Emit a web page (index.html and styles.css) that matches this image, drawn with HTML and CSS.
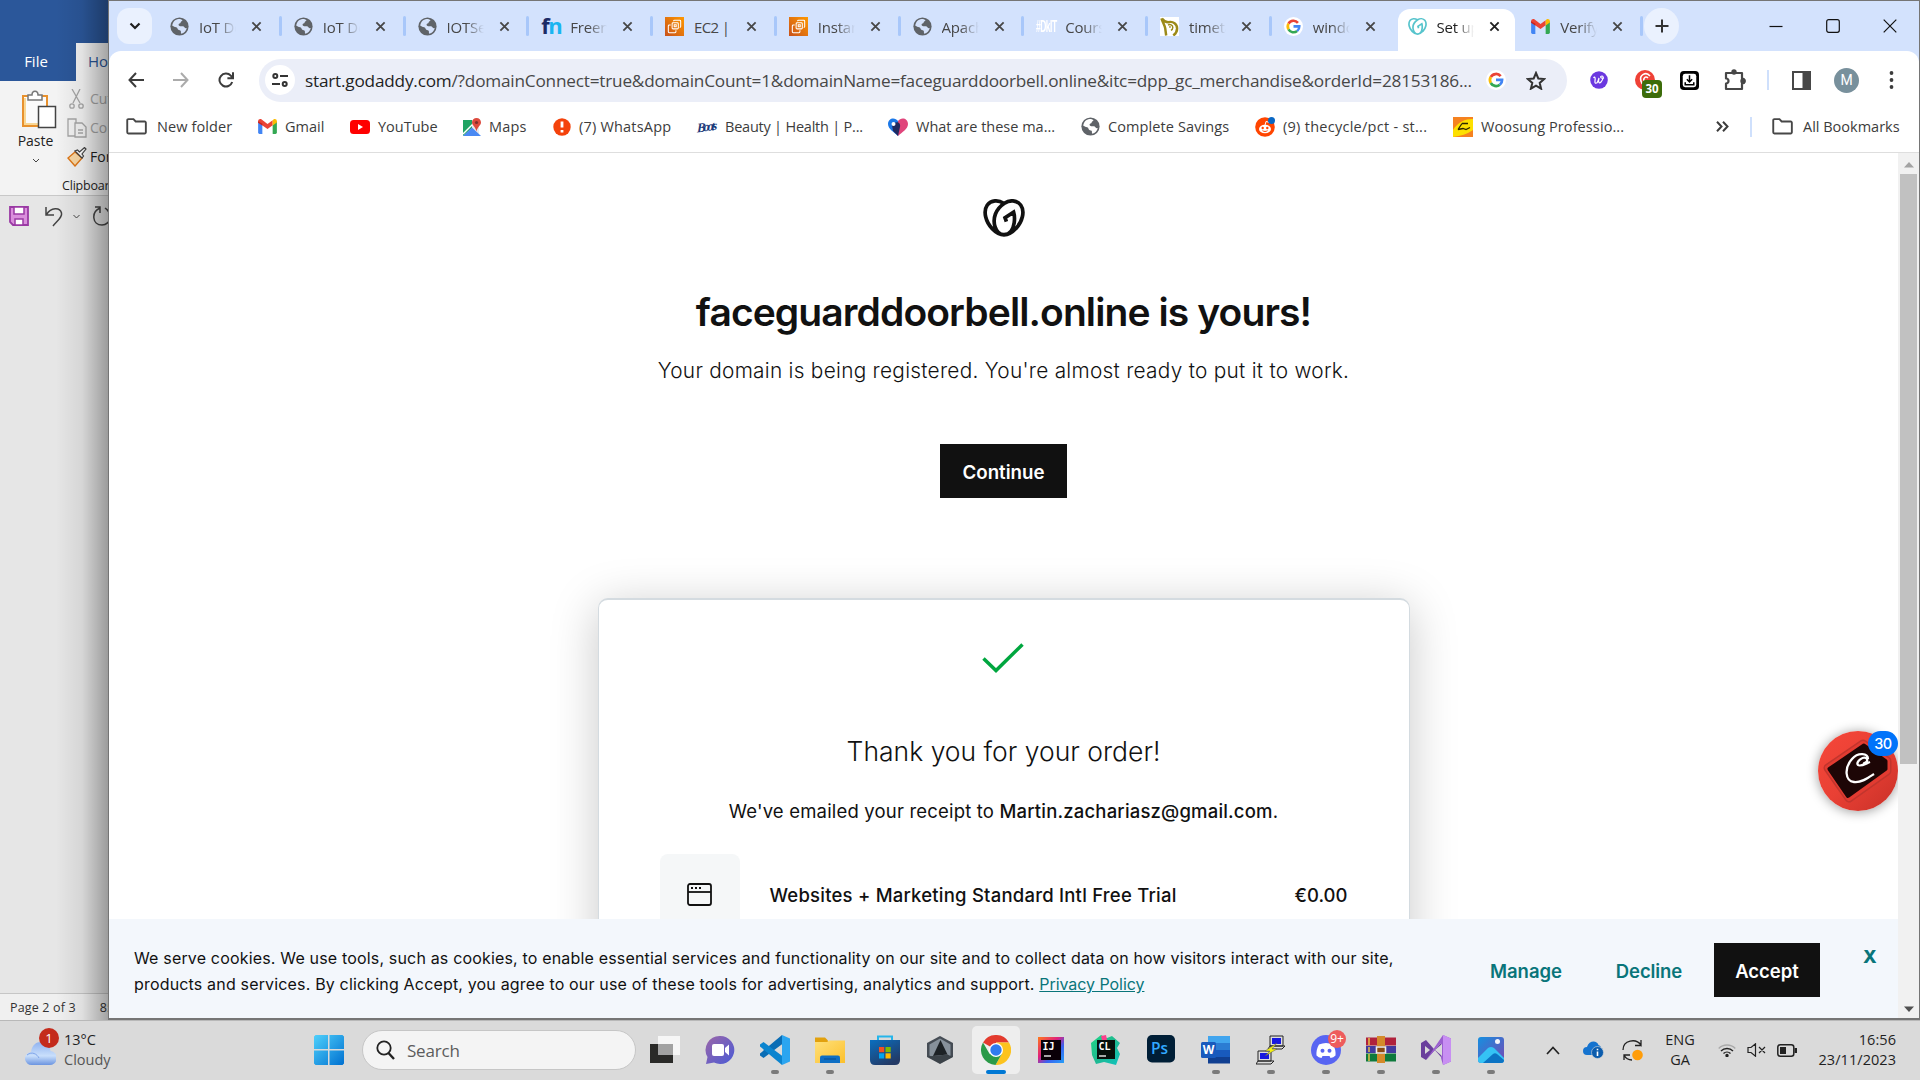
FILE: index.html
```html
<!DOCTYPE html>
<html lang="en">
<head>
<meta charset="utf-8">
<title>Set up your domain</title>
<link rel="stylesheet" href="styles.css">
</head>
<body>
<svg class="defs" width="0" height="0" aria-hidden="true">
  <defs>
    <linearGradient id="gWin" x1="0" y1="0" x2="1" y2="1"><stop offset="0" stop-color="#4fd0fb"/><stop offset="1" stop-color="#0070d0"/></linearGradient>
    <linearGradient id="gAws" x1="0" y1="1" x2="1" y2="0"><stop offset="0" stop-color="#c8511b"/><stop offset="1" stop-color="#f90"/></linearGradient>
    <linearGradient id="gFolder" x1="0" y1="0" x2="1" y2="1"><stop offset="0" stop-color="#ffe07a"/><stop offset="1" stop-color="#fcc02c"/></linearGradient>
    <linearGradient id="gStore" x1="0" y1="0" x2="0.6" y2="1"><stop offset="0" stop-color="#0a6fc0"/><stop offset="1" stop-color="#233a66"/></linearGradient>
    <linearGradient id="gTeams" x1="0" y1="0" x2="1" y2="1"><stop offset="0" stop-color="#9c66a8"/><stop offset="1" stop-color="#4a5bd6"/></linearGradient>
    <linearGradient id="gPhoto" x1="0" y1="0" x2="1" y2="1"><stop offset="0" stop-color="#1590e0"/><stop offset="1" stop-color="#7848b4"/></linearGradient>
    <linearGradient id="gIj" x1="0" y1="0" x2="1" y2="1"><stop offset="0" stop-color="#ff7a1a"/><stop offset=".4" stop-color="#e0207c"/><stop offset=".65" stop-color="#3a62f0"/><stop offset="1" stop-color="#25a0f8"/></linearGradient>
    <linearGradient id="gCloud" x1="0" y1="0" x2="0" y2="1"><stop offset="0" stop-color="#8fb2f0"/><stop offset=".6" stop-color="#c9dffb"/><stop offset="1" stop-color="#6b94e0"/></linearGradient>
    <linearGradient id="gCl" x1="0" y1="0" x2="1" y2="1"><stop offset="0" stop-color="#21d789"/><stop offset=".5" stop-color="#1fb98f"/><stop offset="1" stop-color="#0fc3c0"/></linearGradient>
    <symbol id="globe" viewBox="0 0 20 20"><circle cx="10" cy="10" r="9.600" fill="#5f6368"/><path class="land" d="M9 2.200c2 0 3 .5 4.200 1.300-.4 1-1.700 1-2 2.200-.2 1.200-2.400 1-2.200 2.600.2 1.400 3 1.300 4.600 1.500 1.600.2 1.800 2.600 4 1.900-.6 3-2.700 5.200-5.600 6-1-.7-.1-2.300-.8-3.100-.9-.9-3-.5-3.200-2.100-.3-1.900-2.600-1.600-3.600-2.200C3.500 9.800 2.900 9.400 2.400 9.300 2.800 5.300 5.400 2.500 9 2.200z"/></symbol>
    <symbol id="google" viewBox="0 0 24 24"><circle cx="12" cy="12" r="12" fill="#fff"/><g fill="none" stroke-width="3.300"><path d="M17.600 7.400A7.300 7.300 0 0 0 5.700 8.400" stroke="#ea4335"/><path d="M5.700 8.400a7.300 7.300 0 0 0 0 7.200" stroke="#fbbc05"/><path d="M5.700 15.600a7.300 7.300 0 0 0 10.900 2.100" stroke="#34a853"/><path d="M16.600 17.700a7.300 7.300 0 0 0 2.700-5.900H12" stroke="#4285f4"/></g></symbol>
    <symbol id="gmail" viewBox="0 0 20 16"><path d="M0 2.500V14.500A1.500 1.500 0 0 0 1.500 16H4.500V6z" fill="#4285f4"/><path d="M20 2.500V14.500A1.500 1.500 0 0 1 18.500 16H15.500V6z" fill="#34a853"/><path d="M0 2.300C0 .2 2.300-.6 3.800.5L10 5.200 15.500 1.200V6.600L10 10.700 0 3.800z" fill="#ea4335"/><path d="M15.500 1.200 16.400.5C18 -.6 20 .3 20 2.300V3.800L15.500 7z" fill="#fbbc04"/><path d="M0 2.500 4.500 5v2L0 4z" fill="#c5221f"/></symbol>
    <symbol id="folder" viewBox="0 0 22 18"><path d="M1.200 2.500a1.200 1.200 0 0 1 1.200-1.300h5.400l2.300 2.500h9.600a1.200 1.200 0 0 1 1.200 1.200v10.300a1.200 1.200 0 0 1-1.200 1.200H2.400a1.200 1.200 0 0 1-1.200-1.200z" fill="none" stroke="#474747" stroke-width="2"/></symbol>
    <symbol id="ec2" viewBox="0 0 20 20"><path d="M0 0h20v20H0z" fill="url(#gAws)"/><g fill="none" stroke="#fff" stroke-width="1.100"><rect x="7.500" y="6" width="6.500" height="6.500" rx="1"/><path d="M9.700 8.200h2.100v2.100H9.700z"/><path d="M6 8.500H4.500q-1 0-1 1v6q0 1 1 1h6q1 0 1-1V14M9 4.500q0-1 1-1h5.500q1 0 1 1V10q0 1-1 1"/></g></symbol>
    <symbol id="x" viewBox="0 0 12 12"><path d="M1.500 1.500l9 9M10.500 1.500l-9 9" stroke="currentColor" stroke-width="2" fill="none"/></symbol>
    <symbol id="gd" viewBox="0 0 42 38"><g fill="none" stroke="currentColor" stroke-width="3.700"><path d="M20.500 4.200C15.500.8 8 1 4.300 6 -.2 12.500 2.800 23 9.200 29.600c3 3.100 7.300 6.200 11.800 6.200s9-3.100 11.800-6.200C39.200 23 42.300 12.500 37.700 6 33.800.8 26.500.8 21.500 4.200 12.500 10 9.500 19.500 12 27.500c1.500 4.800 5 8.200 9 8.200 6 0 9.300-6 10.200-12 .6-4.300.3-7.700-.6-10.600l-8.600 5.600 1.400 4"/></g></symbol>
  </defs>
</svg>

<main class="desktop">
  <aside class="word">
    <div class="word-title"></div>
    <div class="word-tabs"><span class="word-file">File</span><span class="word-home">Home</span></div>
    <div class="ribbon">
      <div class="ribbon-body">
        <div class="paste">
          <svg width="36" height="40" viewBox="0 0 36 40"><path d="M2 6h24v30H2z" fill="#fbfbfb" stroke="#e8912d" stroke-width="2"/><path d="M4 8v26h14" fill="none" stroke="#f8d795" stroke-width="2"/><path d="M7 5h4c0-5 6-5 6 0h4v5H7z" fill="#fff" stroke="#777" stroke-width="1.500"/><path d="M17.500 16.500h17v21h-17z" fill="#fff" stroke="#444" stroke-width="1.500"/></svg>
          <span>Paste</span>
          <svg width="8" height="5" viewBox="0 0 8 5"><path d="M1 1l3 3 3-3" fill="none" stroke="#444"/></svg>
        </div>
        <div class="clip">
          <span class="off"><svg width="20" height="20" viewBox="0 0 20 20" fill="none" stroke="#a6a6a6" stroke-width="1.300"><path d="M5 0l8 14M13 0L6 14"/><circle cx="5" cy="17" r="2.200"/><circle cx="14" cy="17" r="2.200"/></svg>Cut</span>
          <span class="off"><svg width="20" height="20" viewBox="0 0 20 20" fill="#f3f3f3" stroke="#a6a6a6" stroke-width="1.300"><path d="M1 1h8v17H1z"/><path d="M8 5h7l4 4v10H8zM11 12h5M11 15h5"/></svg>Copy</span>
          <span><svg width="20" height="20" viewBox="0 0 20 20"><path d="M8 5L1 11l7 8 7-8z" fill="#fbd9a5" stroke="#e07818" stroke-width="1.400"/><path d="M8 4l7 7 1.500-2L15 7l4-5-1.500-1.500L12.500 5 10.500 3z" fill="#fff" stroke="#444" stroke-width="1.200"/></svg>Format</span>
        </div>
      </div>
      <span class="ribbon-label">Clipboard</span>
    </div>
    <div class="quick">
      <svg width="20" height="20" viewBox="0 0 20 20"><path d="M1 1h18v18H4l-3-3z" fill="#da8fdc" stroke="#9a3aa4" stroke-width="1.800"/><path d="M5 1h10v7H5zM6 13h8v6H6z" fill="#fff" stroke="#9a3aa4" stroke-width="1.500"/></svg>
      <svg width="18" height="21" viewBox="0 0 18 21" fill="none" stroke="#444" stroke-width="1.500"><path d="M1 1v8h8M1.500 8.500C6 1 15 1 16.500 7 17.500 11 13 14 8 20"/></svg>
      <svg width="7" height="5" viewBox="0 0 7 5"><path d="M.5 1l3 3 3-3" fill="none" stroke="#444"/></svg>
      <svg width="20" height="20" viewBox="0 0 20 20" fill="none" stroke="#444" stroke-width="1.500"><path d="M3 1h5v6M8 2C-1 6 0 19 10 19c4 0 8-3 8-8 0-4-2-7-5-9"/></svg>
    </div>
    <div class="doc"></div>
    <div class="word-status"><span>Page 2 of 3</span><span>852 words</span></div>
    <div class="word-shade"></div>
  </aside>

  <section class="chrome">
    <div class="strip">
      <button class="tab-search"><svg width="12" height="8" viewBox="0 0 12 8"><path d="M1.500 1.500L6 6l4.500-4.500" fill="none" stroke="#1f1f1f" stroke-width="2.200"/></svg></button>
      <div class="tabs">
        <div class="tab"><svg class="fav"><use href="#globe"/></svg><span>IoT Device</span><svg class="tx"><use href="#x"/></svg></div>
        <div class="tab"><svg class="fav"><use href="#globe"/></svg><span>IoT Device</span><svg class="tx"><use href="#x"/></svg></div>
        <div class="tab"><svg class="fav"><use href="#globe"/></svg><span>IOTSecurity</span><svg class="tx"><use href="#x"/></svg></div>
        <div class="tab"><b class="fav fn"><i>f</i>n</b><span>Freenom</span><svg class="tx"><use href="#x"/></svg></div>
        <div class="tab"><svg class="fav"><use href="#ec2"/></svg><span class="ec">EC2 | eu</span><svg class="tx"><use href="#x"/></svg></div>
        <div class="tab"><svg class="fav"><use href="#ec2"/></svg><span>Instances</span><svg class="tx"><use href="#x"/></svg></div>
        <div class="tab"><svg class="fav"><use href="#globe"/></svg><span>Apache</span><svg class="tx"><use href="#x"/></svg></div>
        <div class="tab"><b class="fav dkit">#DkIT</b><span>Courses</span><svg class="tx"><use href="#x"/></svg></div>
        <div class="tab"><svg class="fav" viewBox="0 0 20 20"><path d="M0 0h20v20H0z" fill="#fff"/><path d="M1.500 1.500C3 6 5 9 5.500 12L6.500 19.500M2 1.500c2 2.500 4 4 6.500 4C14 4 18 7.500 18 12c0 3-1.500 5.500-4 7.500" fill="none" stroke="#9c8a18" stroke-width="2.600"/><path d="M8.500 8.500c2-1.500 5 0 5 2.500 0 1.500-1 2.500-2 3" fill="none" stroke="#9c8a18" stroke-width="1.500"/><circle cx="10.500" cy="10.500" r=".9" fill="#9c8a18"/></svg><span>timetable</span><svg class="tx"><use href="#x"/></svg></div>
        <div class="tab nosep"><svg class="fav"><use href="#google"/></svg><span>windows</span><svg class="tx"><use href="#x"/></svg></div>
        <div class="tab active"><svg class="fav teal"><use href="#gd"/></svg><span>Set up you</span><svg class="tx"><use href="#x"/></svg></div>
        <div class="tab"><svg class="fav mail"><use href="#gmail"/></svg><span>Verify yo</span><svg class="tx"><use href="#x"/></svg></div>
      </div>
      <button class="new-tab"><svg width="14" height="14" viewBox="0 0 14 14"><path d="M7 .5v13M.5 7h13" stroke="#333" stroke-width="2"/></svg></button>
      <div class="win-buttons">
        <svg width="14" height="14" viewBox="0 0 14 14"><path d="M.5 7.500h13" stroke="#111" stroke-width="1.200"/></svg>
        <svg width="14" height="14" viewBox="0 0 14 14"><rect x=".7" y=".7" width="12.600" height="12.600" rx="2" fill="none" stroke="#111" stroke-width="1.200"/></svg>
        <svg width="14" height="14" viewBox="0 0 14 14"><path d="M.7.7l12.600 12.600M13.300.7L.7 13.300" stroke="#111" stroke-width="1.200"/></svg>
      </div>
    </div>

    <div class="toolbar">
      <div class="nav">
        <svg width="16" height="16" viewBox="0 0 16 16"><path d="M8 1L1.500 8 8 15M1.500 8H16" fill="none" stroke="#3c3c3c" stroke-width="2"/></svg>
        <svg width="16" height="16" viewBox="0 0 16 16"><path d="M8 1l6.500 7L8 15M14.500 8H0" fill="none" stroke="#ababab" stroke-width="2"/></svg>
        <svg width="16" height="16" viewBox="0 0 16 16"><path d="M14.200 10A6.500 6.500 0 1 1 12.800 3.600L14.500 5.600M15 .3v5.900H9.400" fill="none" stroke="#3c3c3c" stroke-width="2"/></svg>
      </div>
      <div class="omnibox">
        <span class="site"><svg width="16" height="14" viewBox="0 0 16 14" fill="none" stroke="#333" stroke-width="2"><circle cx="3.300" cy="3" r="2"/><path d="M8 3h8M0 11h8"/><circle cx="12.700" cy="11" r="2"/></svg></span>
        <span class="url"><em>start.godaddy.com</em>/?domainConnect=true&amp;domainCount=1&amp;domainName=faceguarddoorbell.online&amp;itc=dpp_gc_merchandise&amp;orderId=28153186...</span>
        <svg class="og" width="20" height="20"><use href="#google"/></svg>
        <svg width="20" height="19" viewBox="0 0 20 19"><path d="M10 2l2.300 5.500 5.900.5-4.500 3.900 1.400 5.800L10 14.600l-5.100 3.100 1.400-5.800L1.800 8l5.900-.5z" fill="none" stroke="#333" stroke-width="2"/></svg>
      </div>
      <div class="exts">
        <svg width="18" height="18" viewBox="0 0 18 18"><circle cx="9" cy="9" r="8.800" fill="#6b38e0"/><path d="M3.500 7c1.500-2 2 0 1.500 3s2 3 3 0l1-3c-1 4 0 6 2 4s3-6 1-6-2 3 2 2" fill="none" stroke="#fff" stroke-width="1.200"/></svg>
        <span class="ext-red"><svg width="20" height="20" viewBox="0 0 20 20"><circle cx="10" cy="10" r="10" fill="#ef4136"/><path d="M15 6c-4-5-11-1-9 5 1 4 4 5 7 4M13 8c-3-3-6 2-3 4" fill="none" stroke="#fff" stroke-width="1.600"/></svg><b>30</b></span>
        <svg class="dl" width="19" height="19" viewBox="0 0 20 20"><rect width="20" height="20" rx="4" fill="#000"/><rect x="2.900" y="2.900" width="14.200" height="14.200" rx="2.500" fill="#fff"/><path d="M10 4.500v7M7.200 8.700l2.800 2.800 2.800-2.800M5.500 11.800v2.700h9v-2.700" fill="none" stroke="#000" stroke-width="1.600"/></svg>
        <svg class="puz" width="22" height="22" viewBox="0 0 22 22"><path d="M2 4h16v5.500a2.300 2.300 0 0 1 0 5V20H2v-5.500a2.500 2.500 0 0 0 0-5z" fill="none" stroke="#474747" stroke-width="2.200" stroke-linejoin="round"/><circle cx="10" cy="3" r="2.700" fill="#474747"/><circle cx="19" cy="12" r="2.700" fill="#474747"/></svg>
        <i class="vsep"></i>
        <svg class="panel" width="19" height="19" viewBox="0 0 19 19"><path d="M1 1h17v17H1z" fill="none" stroke="#474747" stroke-width="2"/><path d="M10.500 1H18v17h-7.500z" fill="#474747"/></svg>
        <span class="avatar">M</span>
        <svg class="dots" width="5" height="18" viewBox="0 0 5 18" fill="#3c3c3c"><circle cx="2.500" cy="2" r="1.900"/><circle cx="2.500" cy="9" r="1.900"/><circle cx="2.500" cy="16" r="1.900"/></svg>
      </div>
    </div>

    <nav class="bookmarks">
      <a class="bm b1"><svg width="21" height="17"><use href="#folder"/></svg>New folder</a>
      <a class="bm b2"><svg width="19" height="15"><use href="#gmail"/></svg>Gmail</a>
      <a class="bm b3"><svg width="20" height="14" viewBox="0 0 20 14"><rect width="20" height="14" rx="3.500" fill="#f00"/><path d="M8 4l5 3-5 3z" fill="#fff"/></svg>YouTube</a>
      <a class="bm b4"><svg width="18" height="18" viewBox="0 0 18 18"><path d="M0 2h16v16H0z" fill="#e8eaed"/><path d="M0 2h9v8l-9 8z" fill="#1ea362"/><path d="M0 18L9 9.500l9 8.500z" fill="#4a89f3"/><path d="M0 16L11 5" stroke="#fff" stroke-width="1.500"/><path d="M13.500 0c2.600 0 4.500 2 4.500 4.500 0 3-3.500 4-4.500 9-1-5-4.500-6-4.500-9C9 2 11 0 13.500 0z" fill="#dd4b3e"/><circle cx="13.500" cy="4.500" r="1.600" fill="#822f2b"/></svg>Maps</a>
      <a class="bm b5"><svg width="18" height="18" viewBox="0 0 18 18"><circle cx="9" cy="9" r="8.700" fill="#f4420b"/><path d="M9 3.500v6M9 12v2.500" stroke="#fff" stroke-width="2.800"/></svg>(7) WhatsApp</a>
      <a class="bm b6"><b class="boots">Boots</b>Beauty | Health | P...</a>
      <a class="bm b7"><svg width="20" height="18" viewBox="0 0 20 18"><path d="M10 3C7-1.500 0 0 0 6c0 5 6 8 10 12z" fill="#1b78e8"/><path d="M10 3c3-4.500 10-3 10 3 0 5-6 8-10 12z" fill="#e0457b"/><path d="M4 7c3-4 9-4 8 2l-2 9-5-5z" fill="#202a60"/><circle cx="5.500" cy="6" r="2" fill="#fff"/></svg>What are these ma...</a>
      <a class="bm b8"><svg width="19" height="19"><use href="#globe"/></svg>Complete Savings</a>
      <a class="bm b9"><svg width="20" height="20" viewBox="0 0 20 20"><circle cx="10" cy="10" r="9.800" fill="#ff4500"/><ellipse cx="10" cy="12" rx="6" ry="4.300" fill="#fff"/><circle cx="7.700" cy="11" r="1.200" fill="#ff4500"/><circle cx="12.300" cy="11" r="1.200" fill="#ff4500"/><path d="M7.500 13.700c1.500 1 3.500 1 5 0" fill="none" stroke="#ff4500"/><path d="M10 8l1-3.500 3 .8" fill="none" stroke="#fff"/><circle cx="16.500" cy="3.500" r="3.500" fill="#0a68c4"/></svg>(9) thecycle/pct - st...</a>
      <a class="bm b10"><svg width="20" height="20" viewBox="0 0 20 20"><path d="M0 0h20v20H0z" fill="#fde000"/><path d="M0 0h20v2C12 2 5 5 0 13zM0 20c8-1 14-3 20-7v7z" fill="#f58220"/><path d="M5 12.500l4-6M9 6.500h6M5 12.500l5-1 3 1 4-2" fill="none" stroke="#2d2600" stroke-width="1.300"/></svg>Woosung Professio...</a>
      <svg class="more" width="13" height="11" viewBox="0 0 13 11"><path d="M1 .8l4.500 4.700L1 10.200M7 .8l4.500 4.700L7 10.200" fill="none" stroke="#3c3c3c" stroke-width="2"/></svg>
      <i class="vsep"></i>
      <a class="bm all"><svg width="21" height="17"><use href="#folder"/></svg>All Bookmarks</a>
    </nav>

    <div class="view">
      <div class="page">
        <div class="content">
          <svg class="logo" width="42" height="38"><use href="#gd"/></svg>
          <h1>faceguarddoorbell.online is yours!</h1>
          <p class="lead">Your domain is being registered. You're almost ready to put it to work.</p>
          <button class="btn continue">Continue</button>
          <article class="card">
            <svg class="check" width="42" height="30" viewBox="0 0 42 30"><path d="M1.500 15.500L14 27.500 40.500 1.500" fill="none" stroke="#00a63f" stroke-width="3.500"/></svg>
            <h2>Thank you for your order!</h2>
            <p class="receipt">We've emailed your receipt to <b>Martin.zachariasz@gmail.com</b>.</p>
            <div class="item">
              <span class="thumb"><svg width="25" height="23" viewBox="0 0 25 23"><rect x="1" y="1" width="23" height="21" rx="2" fill="none" stroke="#111" stroke-width="1.800"/><path d="M1 9h23" stroke="#111" stroke-width="1.800"/><path d="M4 5h2M8 5h2M12 5h2" stroke="#111" stroke-width="2"/></svg></span>
              <span class="name">Websites + Marketing Standard Intl Free Trial</span>
              <span class="price">€0.00</span>
            </div>
          </article>
        </div>
        <div class="cookies">
          <p>We serve cookies. We use tools, such as cookies, to enable essential services and functionality on our site and to collect data on how visitors interact with our site,<br>products and services. By clicking Accept, you agree to our use of these tools for advertising, analytics and support. <a>Privacy Policy</a></p>
          <button class="lnk manage">Manage</button>
          <button class="lnk decline">Decline</button>
          <button class="btn accept">Accept</button>
          <button class="lnk close">X</button>
        </div>
        <div class="bubble">
          <svg width="80" height="80" viewBox="0 0 80 80"><defs><linearGradient id="gRed" x1="0" y1="0" x2="1" y2="1"><stop offset="0" stop-color="#f6473a"/><stop offset=".5" stop-color="#e94034"/><stop offset="1" stop-color="#c83028"/></linearGradient></defs><circle cx="40" cy="40" r="40" fill="url(#gRed)"/><path d="M10 37L45 13 69 30v10L31 67z" fill="#c2352d" stroke="#c2352d" stroke-width="9" stroke-linejoin="round"/><path d="M10 37L45 13 69 30v10L31 67z" fill="none" stroke="#e23b31" stroke-width="6" stroke-linejoin="round"/><path d="M11.500 38L46 14.500 67.500 30v8L30 65z" fill="#1d0606" stroke="#1d0606" stroke-width="4" stroke-linejoin="round"/><path d="M52 31c-5 2-10 5-12 3-3-3 6-10 9-6 1 2-2 5-4 4M50 28c0-6-10-7-16 0-8 9-7 22 2 23 7 1 14-4 20-8" fill="none" stroke="#fff" stroke-width="2.300"/></svg>
          <b>30</b>
        </div>
      </div>
      <div class="scroll">
        <svg width="10" height="6" viewBox="0 0 10 6"><path d="M0 5.500L5 0l5 5.500z" fill="#a3a3a3"/></svg>
        <div class="thumbbar"></div>
        <svg width="10" height="6" viewBox="0 0 10 6"><path d="M0 .5L5 6l5-5.500z" fill="#505050"/></svg>
      </div>
    </div>
  </section>
</main>

<footer class="taskbar">
  <div class="weather">
    <span class="cloud"><svg width="31" height="25" viewBox="0 0 31 25"><path d="M7 24a6.500 6.500 0 0 1-1-13C7 4 11 1 16 1s9 3 9.500 9A7 7 0 0 1 24 24z" fill="url(#gCloud)"/><path d="M2 14c5-4 10-1 12 3" fill="none" stroke="#7fa5ea"/></svg><b>1</b></span>
    <span class="temp">13°C<small>Cloudy</small></span>
  </div>
  <svg class="start" width="30" height="30" viewBox="0 0 30 30"><path d="M1.500 0H14v14H0V1.500zM15.500 0H28.500L30 1.500V14H15.500zM0 15.500h14V30H1.500L0 28.500zM15.500 15.500H30v13L28.500 30h-13z" fill="url(#gWin)"/></svg>
  <div class="search"><svg width="19" height="20" viewBox="0 0 19 20"><circle cx="8" cy="8" r="6.700" fill="none" stroke="#222" stroke-width="1.800"/><path d="M12.500 13l5.500 6" stroke="#222" stroke-width="2.400"/></svg>Search</div>
  <div class="apps">
    <span><svg viewBox="0 0 30 30"><path d="M0 9h23v19H0z" fill="#2a2a28"/><path d="M8 1h22v19H8z" fill="#f6f6f6"/><path d="M8 9h15v11H8z" fill="#a2a2a2"/></svg></span>
    <span><svg viewBox="0 0 30 30"><path d="M15 1a14 14 0 1 1-6 26.500L1 29l1.500-7A14 14 0 0 1 15 1z" fill="url(#gTeams)"/><rect x="7" y="9" width="12" height="12" rx="2" fill="#fff"/><path d="M20 13l4-3.500v11L20 17z" fill="#fff"/></svg></span>
    <span class="run"><svg viewBox="0 0 30 30"><path d="M23 8.500L3.500 23 0 20.500v-2L22 0z" fill="#0a6db5"/><path d="M23 21.500L3.500 7 0 9.500v2L22 30z" fill="#0b84cf"/><path d="M22 0l8 3.500v23L22 30z" fill="#2ba5f0"/></svg></span>
    <span class="run"><svg viewBox="0 0 30 30"><path d="M0 2.500h10l3 3v5H0z" fill="#e2a10e"/><path d="M0 7h12l2-1.500h16V28H0z" fill="url(#gFolder)"/><path d="M5 28v-5.500q0-2 2-2h16q2 0 2 2V28z" fill="#0d6ec4"/><path d="M9 24h12" stroke="#064a8d"/></svg></span>
    <span><svg viewBox="0 0 30 30"><path d="M8 7V1.500h14V7" fill="none" stroke="#26b5ea" stroke-width="2"/><path d="M0 5h30v20q0 5-5 5H5q-5 0-5-5z" fill="url(#gStore)"/><path d="M9 12h5.200v5.200H9z" fill="#f25022"/><path d="M15.500 12h5.200v5.200h-5.200z" fill="#7fba00"/><path d="M9 18.300h5.200v5.200H9z" fill="#00a4ef"/><path d="M15.500 18.300h5.200v5.200h-5.200z" fill="#ffb900"/></svg></span>
    <span><svg viewBox="0 0 30 30"><path d="M15 1l13 7v14l-13 7-13-7V8z" fill="#454c54"/><path d="M15 3.500l10.500 6v11L15 26.500l-10.500-6v-11z" fill="#87919b"/><path d="M15.500 5l7 14.500L8 21z" fill="#1d2226"/><path d="M2.500 21.500L8 21l14.500-1.500 5 2.500L15 28.500z" fill="#3b4248"/></svg></span>
    <span class="on"><svg viewBox="0 0 30 30"><path d="M15 15L2 7.500A15 15 0 0 1 28 7.500H15z" fill="#e33b2e"/><path d="M28 7.500A15 15 0 0 1 14.500 30L21 18.500 15 7.500h13z" fill="#fcc31e"/><path d="M2 7.500A15 15 0 0 0 14.500 30L21 18.500 8.500 18.800z" fill="#2a9a48"/><circle cx="15" cy="15" r="7" fill="#fff"/><circle cx="15" cy="15" r="5.700" fill="#2f7bee"/></svg></span>
    <span><svg viewBox="0 0 30 30"><path d="M2 2h26v26H2z" fill="url(#gIj)"/><path d="M5 5h20v20H5z" fill="#0a0008"/><text x="6.500" y="15" class="ij">IJ</text><path d="M8 21h7" stroke="#fff" stroke-width="1.300"/></svg></span>
    <span><svg viewBox="0 0 30 30"><path d="M0 8l10-8 6 3 5-2 8 7-3 5 3 6-4 11-12-3-8 2-4-9z" fill="url(#gCl)"/><path d="M10 1l5-1 1 5h-5z" fill="#fc3e8c"/><path d="M6 5h18v19H6z" fill="#06100c"/><text x="7.500" y="14.500" class="ij">CL</text><path d="M8 21h7" stroke="#fff" stroke-width="1.300"/></svg></span>
    <span><svg viewBox="0 0 30 30"><rect x="1" y="0" width="28" height="27.500" rx="5" fill="#001e36"/><text x="5" y="19" class="ps">Ps</text></svg></span>
    <span class="run"><svg viewBox="0 0 30 30"><path d="M7 1h22v7H7z" fill="#41a5ee"/><path d="M7 8h22v7H7z" fill="#2b7cd3"/><path d="M7 15h22v7H7z" fill="#185abd"/><path d="M7 22h22v6.500H7z" fill="#103f91"/><rect y="7" width="15" height="16" rx="1.500" fill="#185abd"/><text x="1.800" y="19" class="wd">W</text></svg></span>
    <span class="run"><svg viewBox="0 0 30 30"><g fill="#ddd" stroke="#222" stroke-width="1"><path d="M14 1h13v10H14zM12 14l2-3h15l-3 3zM2 16h13v10H2zM0 29l2-3h16l-3 3z"/></g><path d="M16 3h9v6h-9zM4 18h9v6H4z" fill="#1818e0"/><path d="M21 8l-12 8h5l-5 5 12-7h-5z" fill="#f4f010" stroke="#555" stroke-width=".5"/></svg></span>
    <span class="run badge9"><svg viewBox="0 0 30 30"><circle cx="15" cy="15" r="15" fill="#5865f2"/><path d="M8 9.500q7-3 14 0 3 5 2.500 11-2 2-5 2.500l-1-2h-7l-1 2q-3-.5-5-2.500Q5 14.500 8 9.500z" fill="#fff"/><circle cx="11.500" cy="15.800" r="2" fill="#5865f2"/><circle cx="18.500" cy="15.800" r="2" fill="#5865f2"/></svg><b>9+</b></span>
    <span class="run"><svg viewBox="0 0 30 30"><path d="M0 2.500h30v8H0z" fill="#b0223c"/><path d="M0 11h30v7H0z" fill="#433a9e"/><path d="M0 18.500h30v8H0z" fill="#0e7a3c"/><path d="M3 3v7M3 12v5M3 19v7" stroke="#e8c24a" stroke-width="1.500"/><path d="M11 1h8v27h-8z" fill="#d48a2a"/><path d="M11 11h8v8h-8z" fill="#8a4a12"/><path d="M10.500 12h9v6h-9z" fill="none" stroke="#eee" stroke-width="1.600"/></svg></span>
    <span class="run"><svg viewBox="0 0 30 30"><path d="M0 8l5-3 15 17V8L5 25l-5-3z" fill="#6a3f9c"/><path d="M5 25L22 0l8 3.500v23L22 30l-2-7V8z" fill="#9b5fd0"/><path d="M22 0l8 3.500v23L22 30z" fill="#c88ff2"/><path d="M4 11l5 4-5 4zM21 9v12l-7-6z" fill="#dadada"/></svg></span>
    <span class="run"><svg viewBox="0 0 30 30"><rect x="2" y="2" width="26" height="26" rx="3" fill="url(#gPhoto)"/><path d="M2 23l10-10q3-2 6 0l10 10v2q0 3-3 3H5q-3 0-3-3z" fill="#35c3f5"/><path d="M7 28l10-9q2-1.500 4 0l7 6q0 3-3 3z" fill="#0c74c4"/><circle cx="21.500" cy="6.500" r="2.500" fill="#f4f6fb"/></svg></span>
  </div>
  <div class="tray">
    <svg width="14" height="9" viewBox="0 0 14 9"><path d="M1 8l6-6.500L13 8" fill="none" stroke="#222" stroke-width="1.700"/></svg>
    <svg width="21" height="18" viewBox="0 0 21 18"><path d="M4 14a4 4 0 0 1 0-8C6-1 14-1 15.500 4 19 5 19 10 18 14z" fill="#1573cf"/><circle cx="14.500" cy="11.500" r="6" fill="#0b5cad" stroke="#dadada" stroke-width=".6"/><path d="M14.500 10.500v4.500M14.500 7.700v1.600" stroke="#fff" stroke-width="1.600"/></svg>
    <svg width="21" height="21" viewBox="0 0 21 21"><path d="M1 10C1 0 14-2 19 5V0M19 5.500h-6M2 20v-5h6M2 15c2 4 5 5 8 5" fill="none" stroke="#222" stroke-width="1.300"/><circle cx="15.500" cy="15" r="5.300" fill="#ff9d0a"/></svg>
    <span class="lang">ENG<br>GA</span>
    <svg class="wifi" width="18" height="14" viewBox="0 0 18 14" fill="none" stroke="#222" stroke-width="1.400"><path d="M.7 5.500a11.500 11.500 0 0 1 16.600 0" stroke="#aaa"/><path d="M3 8a8.500 8.500 0 0 1 12 0M5.500 10.600a5 5 0 0 1 7 0"/><circle cx="9" cy="12.500" r="1" fill="#222"/></svg>
    <svg class="vol" width="19" height="14" viewBox="0 0 19 14" fill="none" stroke="#222" stroke-width="1.200"><path d="M1 4.500h3L8.500.8v12.400L4 9.500H1zM12 4l6 6M18 4l-6 6"/></svg>
    <svg class="bat" width="20" height="13" viewBox="0 0 20 13"><rect x=".8" y=".8" width="16" height="11.400" rx="2.500" fill="none" stroke="#222" stroke-width="1.500"/><path d="M3 3h6v7H3zM17.500 4H20v5h-2.500z" fill="#222"/></svg>
    <span class="clock">16:56<br>23/11/2023</span>
  </div>
</footer>
</body>
</html>
```
FILE: styles.css
```css
* { box-sizing: border-box; }
body { margin: 0; width: 1920px; height: 1080px; overflow: hidden; display: grid; grid-template-rows: 1020px 60px; font-family: "Open Sans", "Noto Sans", sans-serif; font-size: 15px; color: #1f1f1f; }
button { font: inherit; border: 0; padding: 0; background: none; }
svg { display: block; flex: none; }
.defs { position: absolute; }
.land { fill: var(--land, #d5e2fb); }
h1, h2, p { margin: 0; font-weight: 400; white-space: nowrap; }
.desktop { display: grid; grid-template-columns: 108px 1812px; min-height: 0; }

/* Word window */
.word { position: relative; overflow: hidden; background: #e6e6e6; display: grid; grid-template-rows: 43px 38px 115px 40px 1fr 27px; white-space: nowrap; }
.word-title { background: #2b579a; }
.word-tabs { display: flex; background: #2b579a; font-size: 15px; line-height: 37px; }
.word-file { width: 76px; text-align: center; color: #fff; padding-right: 4px; }
.word-home { background: #f3f3f3; color: #2b579a; padding-left: 12px; flex: 1; }
.ribbon { background: #f3f3f3; border-bottom: 1px solid #c8c8c8; }
.ribbon-body { display: flex; height: 96px; }
.paste { width: 67px; padding: 9px 0 0 10px; display: flex; flex-direction: column; align-items: center; font-size: 14px; line-height: 20px; }
.paste span { margin: 1px 6px 7px 0; }
.paste svg:last-child { margin-right: 6px; }
.clip { display: flex; flex-direction: column; padding-top: 3px; font-size: 14px; }
.clip span { display: flex; align-items: center; gap: 3px; height: 29px; }
.clip .off { color: #a6a6a6; }
.ribbon-label { display: block; margin-left: 62px; font-size: 12.500px; line-height: 18px; letter-spacing: -.2px; }
.quick { display: flex; align-items: center; gap: 13px; padding-left: 9px; }
.quick svg:nth-child(2) { margin-left: 3px; }
.quick svg:nth-child(3) { margin-left: -3px; }
.quick svg:nth-child(4) { margin-left: -1px; }
.word-status { display: flex; gap: 24px; border-top: 1px solid #c6c6c6; background: #f0f0f0; font-size: 12.500px; line-height: 28px; padding-left: 10px; color: #333; letter-spacing: .15px; }
.word-shade { position: absolute; inset: 0 0 0 auto; width: 52px; background: linear-gradient(90deg, transparent, rgba(0,0,0,.07) 50%, rgba(0,0,0,.32)); }

/* Browser frame */
.chrome { border: 1px solid #757575; border-bottom-width: 2px; display: grid; grid-template-rows: 50px 58px 44px 1fr; background: #d3e2fd; min-height: 0; }
.strip { display: flex; padding-left: 8px; }
.tab-search { width: 35px; height: 36px; margin: 7px 4px 0 0; border-radius: 12px; background: #eaf1fe; display: grid; place-items: center; }
.tabs { display: flex; width: 1485px; }
.tab { position: relative; flex: 1; display: flex; align-items: center; height: 50px; padding-left: 14px; color: #474747; }
.tab::after { content: ""; width: 3px; height: 20px; border-radius: 2px; background: #a8c7fa; position: absolute; right: -2px; top: 15px; }
.tab .fav { width: 19px; height: 19px; margin-right: 10px; }
.tab .fav.mail { height: 15px; }
.tab span { width: 37px; overflow: hidden; white-space: nowrap; font-size: 15px; letter-spacing: -.2px; padding-top: 1px; -webkit-mask-image: linear-gradient(90deg, #000 50%, transparent); mask-image: linear-gradient(90deg, #000 50%, transparent); }
.tab .ec { letter-spacing: -.6px; -webkit-mask-image: none; mask-image: none; width: 33px; margin-right: 4px; }
.tx { width: 11px; height: 11px; margin-left: 15px; }
.tab.nosep::after, .tab.active::after { display: none; }
.tab.active { color: #1f1f1f; }
.tab.active::before { content: ""; position: absolute; z-index: 0; left: 4px; width: 117px; top: 8px; bottom: 0; background: #fff; border-radius: 12px 12px 0 0; }
.tab.active > * { position: relative; }
.teal { color: #57c4cc; }
.tab .fn { font: 700 22px/17px "Open Sans", sans-serif; letter-spacing: -1.500px; color: #19b5f1; }
.fn i { font-style: normal; color: #1d2b66; }
.tab .dkit { font: 700 17px/19px "Liberation Sans", sans-serif; letter-spacing: -1px; color: #fff; transform: scaleX(.5); transform-origin: 0 0; }
.new-tab { width: 35px; height: 36px; margin: 7px 0 0 3px; border-radius: 50%; background: #eaf1fe; display: grid; place-items: center; }
.win-buttons { display: flex; gap: 43px; margin: 18px 0 0 auto; padding-right: 22px; }

.toolbar { background: #fff; border-radius: 12px 12px 0 0; display: flex; align-items: center; }
.nav { display: flex; gap: 29px; padding-left: 19px; width: 150px; }
.omnibox { width: 1308px; height: 43px; border-radius: 22px; background: #ebeef8; display: flex; align-items: center; padding-left: 6px; }
.site { width: 30px; height: 30px; border-radius: 50%; background: #fff; display: grid; place-items: center; }
.url { width: 1180px; margin-left: 10px; font-size: 17.200px; white-space: nowrap; color: #474747; letter-spacing: -.2px; }
.url em { font-style: normal; color: #1f1f1f; }
.og { margin: 0 20px 0 1px; }
.exts { flex: 1; display: flex; align-items: center; padding-left: 23px; }
.ext-red { position: relative; margin-left: 27px; }
.ext-red b { position: absolute; left: 7px; top: 10px; width: 20px; height: 18px; border-radius: 4px; background: #3c6c0a; color: #fff; font-size: 11.500px; line-height: 18px; text-align: center; }
.dl { margin-left: 25px; }
.puz { margin-left: 25px; }
.exts .vsep { margin-left: 21px; }
.panel { margin-left: 23px; }
.avatar { width: 25px; height: 25px; margin-left: 23px; border-radius: 50%; background: #78909c; color: #fff; font: 14px/25px Roboto, sans-serif; text-align: center; }
.dots { margin-left: 30px; }
.vsep { width: 2px; height: 20px; background: #cfe0fc; }

.bookmarks { --land: #fff; background: #fff; border-bottom: 1px solid #dedede; display: flex; align-items: center; padding: 0 18px 8px 17px; white-space: nowrap; color: #3c3c3c; font-size: 14.500px; }
.bm { display: flex; align-items: center; gap: 8px; }
.b1 { width: 132px; gap: 10px; letter-spacing: .1px; }
.b2 { width: 92px; }
.b3 { width: 113px; }
.b4 { width: 90px; letter-spacing: .2px; }
.b5 { width: 144px; letter-spacing: .2px; }
.b6 { width: 191px; letter-spacing: -.22px; }
.b7 { width: 193px; }
.b8 { width: 174px; letter-spacing: .1px; }
.b9 { width: 198px; letter-spacing: .27px; }
.b10 { width: 263px; letter-spacing: .1px; }
.bookmarks .vsep { margin: 0 20px 0 21px; }
.all { gap: 10px; }
.boots { width: 20px; font: italic 700 13px/16px "Liberation Serif", serif; letter-spacing: -2.500px; color: #1c3a7a; transform: skewY(-8deg); }

/* Page */
.view { display: grid; grid-template-columns: 1789px 21px; min-height: 0; background: #fff; }
.page { position: relative; overflow: hidden; display: grid; grid-template-rows: 766px 100px; font-family: Inter, "Liberation Sans", sans-serif; color: #111; }
.content { overflow: hidden; display: flex; flex-direction: column; align-items: center; padding-top: 46px; }
h1 { font-size: 39px; font-weight: 600; line-height: 50px; margin-top: 50px; letter-spacing: -.9px; }
.lead { font-size: 20.800px; font-weight: 350; line-height: 30px; margin-top: 19px; letter-spacing: .28px; }
.btn { background: #111; color: #fff; font-weight: 600; font-size: 18.500px; }
.continue { flex: none; width: 127px; height: 54px; margin-top: 58px; padding-top: 2px; font-size: 18.700px; }
.card { margin-top: 100px; width: 812px; height: 400px; flex: none; border: 2px solid #d4dbe0; border-width: 2px 1px; border-radius: 10px; background: #fff; box-shadow: 0 8px 48px rgba(0,0,0,.22); display: flex; flex-direction: column; align-items: center; padding-top: 43px; }
.check { margin-right: 1px; }
h2 { font-size: 26.500px; font-weight: 300; line-height: 36px; margin-top: 60px; }
.receipt { font-size: 18.500px; line-height: 28px; margin-top: 28px; letter-spacing: .18px; }
.receipt b, .name, .price { font-weight: 500; }
.item { align-self: stretch; display: flex; align-items: center; height: 80px; margin-top: 29px; padding: 0 61px; font-size: 18.500px; white-space: nowrap; }
.thumb { width: 80px; height: 80px; border-radius: 8px; background: #f5f7f8; display: grid; place-items: center; }
.name { margin-left: 30px; letter-spacing: .22px; padding-top: 1px; }
.price { margin-left: auto; padding-top: 1px; }
.cookies { background: #f3f7fc; display: flex; align-items: flex-start; padding: 24px 0 0 25px; z-index: 1; font-size: 16px; }
.cookies p { width: 1331px; line-height: 26px; padding-top: 2px; letter-spacing: .17px; }
.cookies a { color: #09757a; text-decoration: underline; letter-spacing: -.05px; }
.lnk { color: #09757a; font-weight: 600; font-size: 18.500px; height: 54px; padding-top: 2px; }
.manage { width: 122px; text-align: center; }
.decline { width: 124px; text-align: center; letter-spacing: -.1px; }
.accept { width: 106px; height: 54px; margin-left: 3px; padding-top: 2px; }
.close { margin: -15px 0 0 43px; font-weight: 800; font-size: 18px; }
.bubble { position: absolute; z-index: 2; left: 1709px; top: 578px; width: 80px; height: 80px; border-radius: 50%; box-shadow: 0 1px 12px rgba(0,0,0,.4); }
.bubble b { position: absolute; right: 0; top: 0; width: 30px; height: 25px; border-radius: 13px; background: #0073fa; color: #fff; font: 500 14.500px/25px Inter, sans-serif; letter-spacing: -.5px; text-align: center; }
.scroll { background: #f1f1f1; display: flex; flex-direction: column; align-items: center; padding: 9px 0 6px; }
.thumbbar { width: 17px; height: 590px; margin: 6px 0 auto; background: #c1c1c1; }

/* Taskbar */
.taskbar { background: #dadada; border-top: 1px solid #b8b8b8; display: flex; align-items: center; padding-bottom: 1px; }
.weather { width: 314px; padding-left: 25px; display: flex; gap: 8px; }
.cloud { position: relative; padding-top: 11px; }
.cloud b { position: absolute; left: 14px; top: -2px; width: 20px; height: 20px; border-radius: 50%; background: #c42b1c; color: #fff; font-size: 13px; font-weight: 400; line-height: 20px; text-align: center; }
.temp { font-size: 14.500px; line-height: 20px; }
.temp small { display: block; font-size: 14.500px; color: #555; }
.search { width: 274px; height: 40px; margin-left: 18px; border: 1px solid #c6c6c6; border-radius: 20px; background: #f4f4f4; display: flex; align-items: center; gap: 12px; padding-left: 13px; font-size: 17px; color: #5c5c5c; letter-spacing: -.2px; }
.apps { display: flex; margin-left: 5px; width: 878px; }
.apps span { position: relative; width: 48px; margin-right: 7.100px; height: 48px; flex: none; display: grid; place-items: center; border-radius: 5px; }
.apps svg { width: 30px; height: 30px; }
.apps .on { background: #eee; }
.apps .run::after, .apps .on::after { content: ""; position: absolute; bottom: 0; width: 8px; height: 4px; border-radius: 2px; background: #7a7a7a; }
.apps .on::after { width: 20px; background: #0078d4; }
.badge9 b { position: absolute; right: 4px; top: 4px; width: 18px; height: 18px; border-radius: 50%; background: #ee5c5c; color: #fff; font-size: 12px; font-weight: 400; line-height: 17px; text-align: center; }
.ij { font: 700 10px "DejaVu Sans Mono", monospace; fill: #fff; }
.ps { font: 600 15.500px "Open Sans", sans-serif; fill: #31a8ff; }
.wd { font: 700 12px "Open Sans", sans-serif; fill: #fff; }
.tray { flex: 1; display: flex; align-items: center; padding: 0 24px 0 27px; font-size: 14.500px; line-height: 20px; }
.tray svg:nth-child(2) { margin-left: 23px; }
.tray svg:nth-child(3) { margin-left: 18px; }
.lang { width: 44px; margin-left: 15px; text-align: center; }
.wifi { margin-left: 16px; }
.vol { margin-left: 11px; }
.bat { margin-left: 11px; }
.clock { margin-left: auto; text-align: right; white-space: nowrap; letter-spacing: .05px; }
```
